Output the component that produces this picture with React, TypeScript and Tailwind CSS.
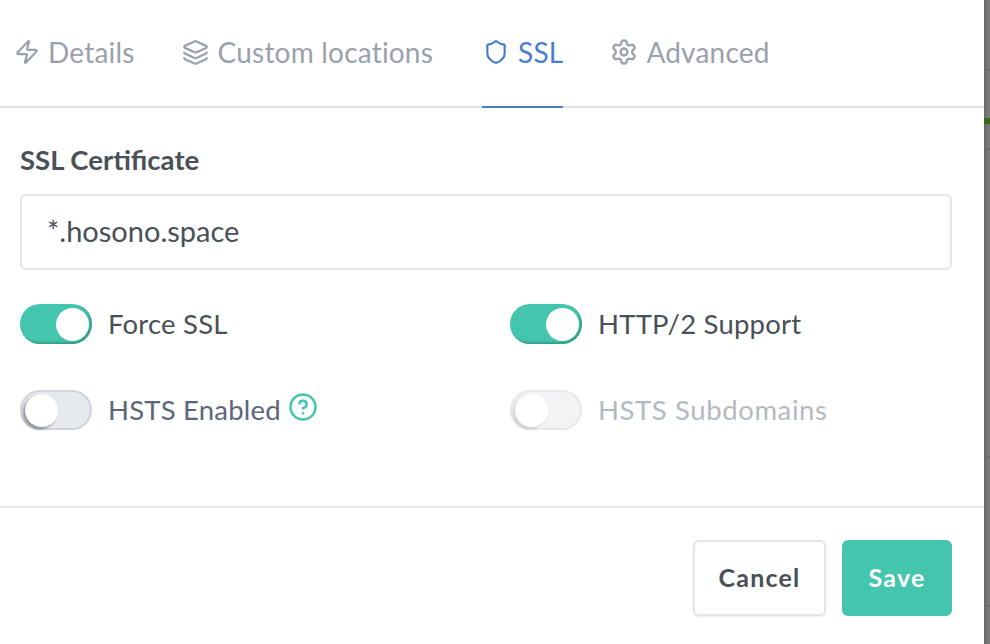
import { Zap, Layers, Shield, Settings, HelpCircle } from "lucide-react"

const font = "font-['Lato',sans-serif]"

function Tab({ icon, label, active, className }: { icon: React.ReactNode; label: string; active?: boolean; className: string }) {
  return (
    <div className={`flex h-[108px] items-center pb-[2px] border-b-2 ${active ? "border-[#467fcf] text-[#467fcf]" : "border-transparent text-[#9aa0ac]"} ${className}`}>
      {icon}
      <span className="text-[28px] tracking-[0.2px]">{label}</span>
    </div>
  )
}

function Toggle({ on, muted, label, extra }: { on?: boolean; muted?: boolean; label: string; extra?: React.ReactNode }) {
  const track = on
    ? "bg-[#44c5ae] justify-end shadow-[inset_-2px_-2px_2px_rgba(30,110,95,0.45)]"
    : muted
      ? "bg-[#f1f3f5] border-2 border-[#e6e8ec] justify-start"
      : "bg-[#e6e9ed] border-2 border-[#cfd4dd] justify-start"
  const text = on ? "text-[#495057]" : muted ? "text-[#b4b9c4]" : "text-[#5c667a]"
  return (
    <div className="flex items-center gap-[16px]">
      <div className={`flex h-[40px] w-[72px] items-center rounded-full p-[3px] ${track}`}>
        <div className={`h-[33px] w-[33px] rounded-full bg-white ${on ? "" : muted ? "shadow-[-2px_2px_3px_rgba(0,0,0,0.15)]" : "shadow-[-2px_2px_3px_rgba(0,0,0,0.4)]"}`} />
      </div>
      <span className={`pb-[1px] text-[27.5px] ${muted ? "tracking-[0.6px]" : "tracking-[0.2px]"} ${text}`}>{label}</span>
      {extra}
    </div>
  )
}

export default function App() {
  return (
    <div className={`flex h-[644px] w-[990px] overflow-hidden bg-[#777] ${font}`}>
      <div className="flex h-full w-[984px] flex-col bg-white">
        <div className="flex h-[108px] border-b-2 border-[#dee2e6] pl-[14px]">
          <Tab className="mr-[47px]" icon={<Zap size={26} strokeWidth={2} className="mr-[8px]" />} label="Details" />
          <Tab className="mr-[49px]" icon={<Layers size={27} strokeWidth={2} className="mr-[9px]" />} label="Custom locations" />
          <Tab className="mr-[47px] pl-[1px]" active icon={<Shield size={26} strokeWidth={2} className="mr-[9px]" />} label="SSL" />
          <Tab className="" icon={<Settings size={28} strokeWidth={2} className="mr-[8px]" />} label="Advanced" />
        </div>
        <div className="flex h-[400px] flex-col border-b-2 border-[#e6e9ed] pl-[20px] pr-[32px] pt-[36px]">
          <div className="text-[27.5px] font-bold leading-[32px] text-[#495057]">SSL Certificate</div>
          <div className="mt-[18px] flex h-[76px] items-center rounded-[6px] border-2 border-[#e2e5ec] pb-[2px] pl-[25px] text-[29px] text-[#495057]">*.hosono.space</div>
          <div className="mt-[33px] grid grid-cols-[490px_1fr] gap-y-[44px]">
            <Toggle on label="Force SSL" />
            <Toggle on label="HTTP/2 Support" />
            <Toggle label="HSTS Enabled" extra={<HelpCircle size={30} strokeWidth={2} className="-ml-[9px] -mt-[6px] text-[#44c5ae]" />} />
            <Toggle muted label="HSTS Subdomains" />
          </div>
        </div>
        <div className="flex flex-1 items-start justify-end gap-[16px] pr-[32px] pt-[32px]">
          <button className="h-[76px] w-[133px] rounded-[6px] border-2 border-[#e2e5ec] bg-white text-[25px] font-bold tracking-[1.2px] text-[#495057] shadow-[0_1px_2px_rgba(0,0,0,0.08)]">Cancel</button>
          <button className="h-[76px] w-[110px] rounded-[6px] bg-[#44c5ae] text-[25px] font-bold tracking-[1.2px] text-white">Save</button>
        </div>
      </div>
      <div className="flex h-full w-[6px] flex-col border-l-2 border-[#6a6a6a]">
        <div className="h-[69px] shrink-0" />
        <div className="h-[2px] shrink-0 bg-[#6a6a6a]" />
        <div className="h-[47px] shrink-0" />
        <div className="-ml-[2px] h-[6px] shrink-0 bg-[#3d6b12]" />
        <div className="h-[24px] shrink-0" />
        <div className="h-[2px] shrink-0 bg-[#6a6a6a]" />
        <div className="h-[306px] shrink-0" />
        <div className="h-[2px] shrink-0 bg-[#6a6a6a]" />
        <div className="h-[147px] shrink-0" />
        <div className="h-[2px] shrink-0 bg-[#6a6a6a]" />
      </div>
    </div>
  )
}
